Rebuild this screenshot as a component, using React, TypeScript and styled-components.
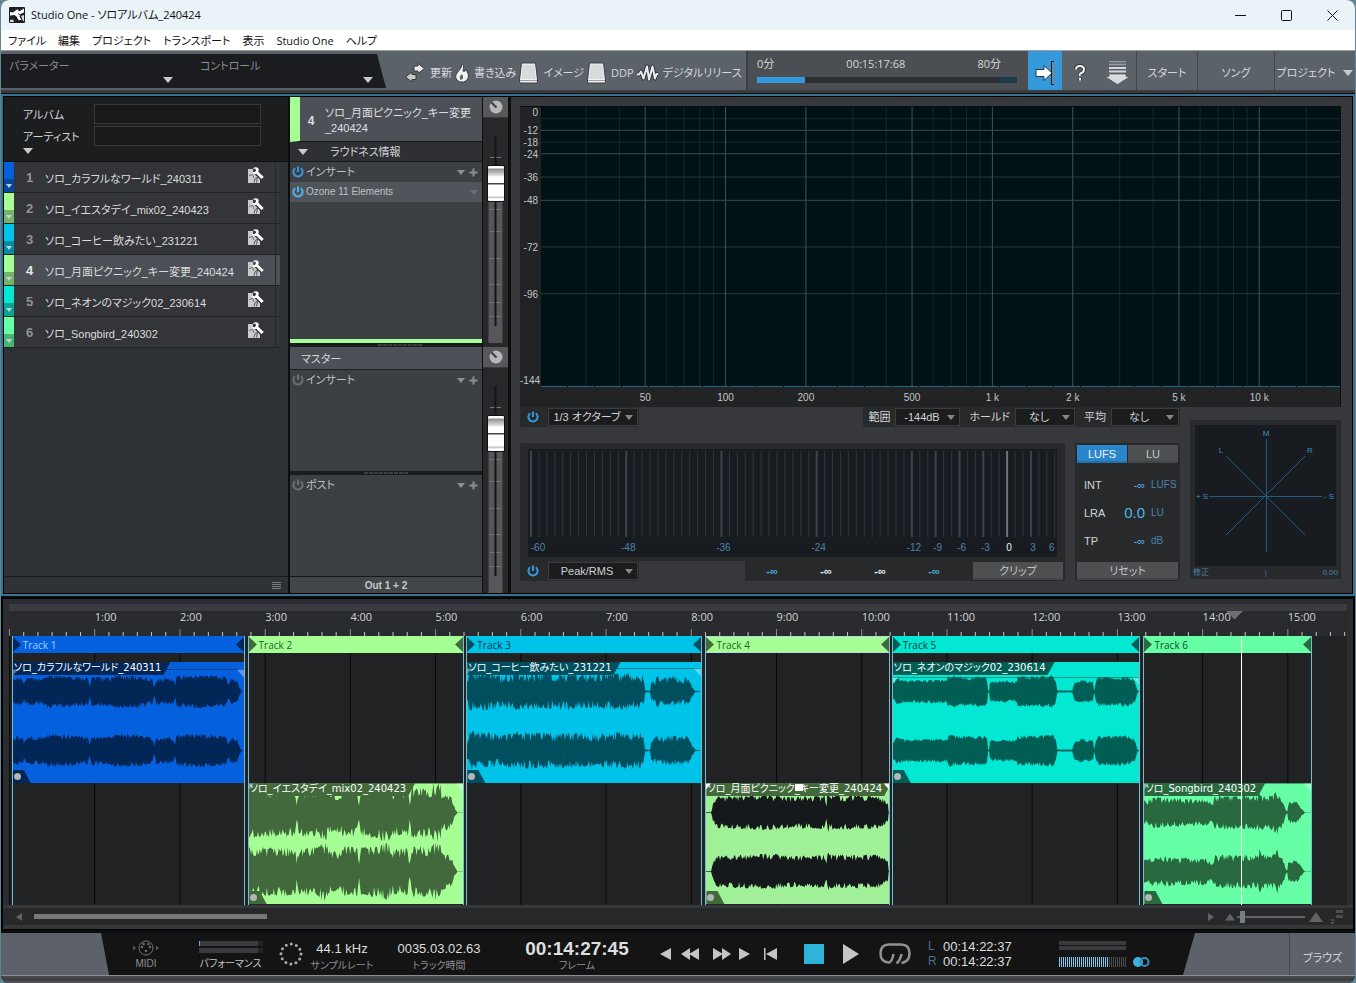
import React from "react";
import styled, { createGlobalStyle, css } from "styled-components";

const UI = `"Open Sans", "Noto Sans CJK JP", sans-serif`;
const HELV = `"Liberation Sans", "Noto Sans CJK JP", sans-serif`;
const MONO_LABEL = `"DejaVu Sans", "Noto Sans CJK JP", sans-serif`;

const GlobalStyle = createGlobalStyle`
  *, *::before, *::after { box-sizing: border-box; }
  body {
    margin: 0;
    background: #5f8795;
    font-family: ${HELV};
    font-size: 11px;
    line-height: 16px;
    font-feature-settings: "palt";
    color: #d3d5d6;
  }
  button, input, select { font: inherit; color: inherit; font-feature-settings: inherit; margin: 0; }
  button { border: 0; padding: 0; background: none; }
  svg { display: block; }
  ul { list-style: none; margin: 0; padding: 0; }
`;

/* ---------- window ---------- */

const Window = styled.div`
  display: flex;
  flex-direction: column;
  min-height: 100vh;
  margin: 0 1px;
  background: #0c0d0e;
  border-radius: 8px;
  overflow: hidden;
`;

const TitleBar = styled.header`
  display: flex;
  align-items: center;
  height: 30px;
  padding-left: 8px;
  background: #eaf3f7;
  color: #111;
  font-family: ${UI};
`;

const TitleText = styled.h1`
  flex: 1;
  margin: 0 0 0 6px;
  font-size: 11px;
  font-weight: 400;
`;

const WindowButton = styled.button`
  display: grid;
  place-items: center;
  width: 46px;
  height: 30px;
`;

const MenuBar = styled.nav`
  display: flex;
  gap: 12px;
  height: 21px;
  padding: 2px 7px 0;
  background: #fff;
  border-bottom: 1px solid #9a9fa3;
  color: #111;
  font-family: ${UI};
`;

/* ---------- toolbar ---------- */

const Toolbar = styled.div`
  display: flex;
  height: 42px;
  background: #5c626a;
  border-bottom: 3px solid #3a3c40;
  font-family: ${UI};
`;

const ParamPanel = styled.div`
  display: grid;
  flex: none;
  grid-template-columns: 191px 1fr;
  width: 385px;
  height: 34px;
  margin-top: 3px;
  padding: 4px 13px 0 8px;
  background: #1a1c20;
  clip-path: polygon(0 0, 376px 0, 385px 100%, 0 100%);
  color: #8b8e90;
`;

const ParamCell = styled.div`
  display: flex;
  justify-content: space-between;
  padding-right: 27px;
  &:last-child { padding-right: 0; }
`;

const Tri = styled.span<{ $c?: string; $s?: number; $mt?: number }>`
  display: block;
  flex: none;
  width: 0;
  height: 0;
  margin-top: ${(p) => p.$mt ?? 0}px;
  border-left: ${(p) => p.$s ?? 5}px solid transparent;
  border-right: ${(p) => p.$s ?? 5}px solid transparent;
  border-top: ${(p) => (p.$s ?? 5) + 1}px solid ${(p) => p.$c ?? "#c9cbcc"};
`;

const ToolActions = styled.div`
  display: flex;
  flex: 1;
  min-width: 0;
  align-items: center;
  gap: 3px;
  padding: 5px 0 0 19px;
  color: #d7d9da;
`;

const ToolButton = styled.button`
  display: flex;
  align-items: center;
  gap: 5px;
  white-space: nowrap;
`;

const Usage = styled.div`
  flex: none;
  width: 282px;
  padding: 5px 11px 0 9px;
  background: #4b4e52;
  border-left: 2px solid #3b3e42;
`;

const UsageLabels = styled.div`
  display: flex;
  justify-content: space-between;
  padding-right: 16px;
  color: #d7d9da;
`;

const UsageBar = styled.div`
  display: flex;
  height: 6px;
  margin-top: 5px;
  background: #2c2f33;
  border-right: 20px solid #1f3848;
`;

const UsageFill = styled.div`
  background: #3498df;
`;

const ToolTab = styled.button<{ $w: number; $active?: boolean; $sep?: boolean }>`
  display: flex;
  flex: none;
  align-items: center;
  justify-content: center;
  gap: 8px;
  width: ${(p) => p.$w}px;
  height: 39px;
  padding-top: 4px;
  color: #d7d9da;
  white-space: nowrap;
  ${(p) => p.$sep && css`border-left: 1px solid #43474c;`}
  ${(p) => p.$active && css`background: #3498d9;`}
`;

/* ---------- main frame ---------- */

const MainFrame = styled.main`
  display: grid;
  grid-template-columns: 284px 192px 25px 1fr;
  gap: 2px;
  flex: 1;
  margin-top: 1px;
  border: 2px solid #3b7290;
  outline: 1px solid #000;
  outline-offset: -3px;
  padding: 1px;
  background: #0d0e0f;
`;

const AlbumPanel = styled.section`
  display: flex;
  flex-direction: column;
  background: #2e3135;
`;

const AlbumHeader = styled.div`
  display: grid;
  grid-template-columns: 71px 167px;
  row-gap: 2px;
  align-content: start;
  height: 65px;
  padding: 7px 19px 0;
  background: #1c1d1f;
  border-bottom: 1px solid #111;
  label { padding-top: 3px; }
`;

const AlbumInput = styled.input`
  width: 167px;
  height: 20px;
  background: #18191b;
  border: 1px solid #38393b;
`;

const TrackRow = styled.li<{ $sel?: boolean }>`
  display: flex;
  align-items: stretch;
  height: 31px;
  margin-right: 8px;
  border-bottom: 1px solid #222325;
  background: ${(p) => (p.$sel ? "#4c5056" : "#333539")};
`;

const Swatch = styled.button<{ $c: string; $d: string }>`
  display: flex;
  align-items: flex-end;
  justify-content: center;
  width: 10px;
  padding-bottom: 4px;
  background: linear-gradient(${(p) => p.$c} 17px, ${(p) => p.$d} 17px);
`;

const TrackNo = styled.span<{ $sel?: boolean }>`
  width: 31px;
  padding-top: 8px;
  text-align: center;
  font-size: 13px;
  font-weight: 700;
  color: ${(p) => (p.$sel ? "#e6e7e8" : "#919395")};
`;

const TrackName = styled.span`
  flex: 1;
  padding-top: 9px;
  white-space: nowrap;
  color: #dcdddd;
`;

const TrackEdit = styled.button`
  display: grid;
  place-items: start center;
  width: 38px;
  padding: 5px 1px 0 0;
  border-right: 1px solid #26282b;
  margin-right: 4px;
`;

const AlbumFooter = styled.div`
  display: flex;
  justify-content: flex-end;
  height: 17px;
  margin-top: auto;
  padding: 4px 7px;
  border-top: 1px solid #191a1b;
`;

/* ---------- channel strip ---------- */

const Strip = styled.section`
  display: flex;
  flex-direction: column;
  background: #3c3f44;
`;

const StripTitle = styled.div`
  display: flex;
  height: 45px;
  align-items: center;
  padding: 4px 8px 0 0;
  background: #4d5157;
  border-left: 10px solid #a6ff94;
  border-bottom: 1px solid #151617;
  line-height: 15px;
  white-space: nowrap;
  color: #dddfe0;
`;

const StripNo = styled.b`
  width: 22px;
  margin-right: 3px;
  text-align: center;
  font-size: 12px;
`;

const LoudnessBar = styled.button`
  display: flex;
  align-items: center;
  gap: 22px;
  height: 20px;
  padding-left: 8px;
  background: #2f3033;
  border-bottom: 1px solid #151617;
`;

const SlotHead = styled.div<{ $fill?: boolean }>`
  display: flex;
  align-items: center;
  gap: 2px;
  flex: none;
  height: 20px;
  padding: 0 4px 0 2px;
  background: ${(p) => (p.$fill ? "#50555b" : "transparent")};
  color: #bfc1c3;
  font-size: ${(p) => (p.$fill ? 10 : 11)}px;
`;

const SlotLabel = styled.span`
  flex: 1;
`;

const IconButton = styled.button`
  display: grid;
  place-items: center;
  height: 12px;
  padding-left: 2px;
  &:first-child { padding-left: 0; }
`;

const SlotBody = styled.div<{ $h: number }>`
  flex: 1 0 ${(p) => p.$h}px;
`;

const GreenLine = styled.div`
  height: 4px;
  background: #a6ff94;
`;

const Grip = styled.div<{ $left: number }>`
  height: 4px;
  padding: 1px 0 1px ${(p) => p.$left}px;
  background: #1b1c1d;
  &::before {
    content: "";
    display: block;
    height: 2px;
    background: repeating-linear-gradient(90deg, #3b3d3f 0 4px, #1b1c1d 4px 5px);
    width: 44px;
  }
`;

const MasterTitle = styled.div`
  height: 23px;
  padding: 4px 11px;
  background: #4d5157;
  border-bottom: 1px solid #1d1e20;
`;

const OutLabel = styled.div`
  height: 17px;
  padding-top: 1px;
  border-top: 1px solid #151617;
  background: #42454a;
  text-align: center;
  font-size: 10px;
  line-height: 15px;
  font-weight: 700;
  color: #c7c9ca;
`;

const FaderColumn = styled.section`
  display: flex;
  flex-direction: column;
  margin: 0 1px 0 -1px;
  background: #28282a;
`;

const FaderUnit = styled.div`
  display: flex;
  flex-direction: column;
  flex: 1;
  &:first-child { flex: 0 0 250px; }
`;

const PanButton = styled.button`
  display: grid;
  place-items: center;
  height: 21px;
  background: #57585b;
  border-bottom: 1px solid #38393b;
`;

const FaderTrack = styled.div`
  display: grid;
  height: 225px;
  > * { grid-area: 1 / 1; }
`;

const FaderInput = styled.input`
  appearance: none;
  writing-mode: vertical-lr;
  direction: rtl;
  width: 25px;
  height: 225px;
  background: transparent;
  &::-webkit-slider-thumb {
    appearance: none;
    width: 18px;
    height: 37px;
    border: 1px solid #111;
    border-radius: 2px;
    background: linear-gradient(#fff 0 2px, #8f8f8f 3px, #d8d8d8 9px, #fff 11px 17px, #444 17px 18px, #fff 19px 30px, #bbb 31px, #fff 33px);
  }
`;

/* ---------- meters ---------- */

const MeterPanel = styled.section`
  display: flex;
  flex-direction: column;
  padding: 9px 11px 12px 9px;
  background: #37383c;
`;

const Spectrum = styled.div`
  display: grid;
  grid-template-columns: 21px 1fr;
  grid-template-rows: 1fr 20px;
  flex: 1 0 301px;
  border-top: 1px solid #0c0d0e;
  border-right: 1px solid #0c0d0e;
  background: #212324;
`;

const Chart = styled.svg`
  width: 100%;
  height: 100%;
  overflow: visible;
  font-family: ${HELV};
  font-size: 10px;
`;

const Lower = styled.div`
  display: flex;
  align-items: flex-start;
  gap: 10px;
`;

const LowerLeft = styled.div`
  flex: 1;
`;

const Row = styled.div`
  display: flex;
  justify-content: space-between;
`;

const ControlStrip = styled.div<{ $gap?: number }>`
  display: flex;
  align-items: center;
  gap: ${(p) => p.$gap ?? 5}px;
  height: 20px;
  padding: 0 1px 0 5px;
  background: #28292b;
  border-radius: 0 0 3px 3px;
`;

const PowerBox = styled.button`
  display: grid;
  place-items: center;
  width: 16px;
  height: 18px;
  margin-right: 7px;
`;

const SelectWrap = styled.span<{ $w: number }>`
  display: grid;
  align-items: center;
  width: ${(p) => p.$w}px;
  > * { grid-area: 1 / 1; }
  > span { justify-self: end; margin-right: 5px; pointer-events: none; }
`;

const SelectBox = styled.select`
  appearance: none;
  width: 100%;
  height: 18px;
  padding: 0 16px 0 4px;
  border: 1px solid #3b3c3e;
  border-radius: 0;
  background: #1b1c1d;
  color: #d0d2d3;
  text-align: center;
  text-align-last: center;
`;

const ControlGroup = styled.label`
  display: flex;
  align-items: center;
  gap: 5px;
`;

const Blocks = styled.div`
  display: flex;
  gap: 10px;
  margin-top: 16px;
`;

const PeakBlock = styled.div`
  flex: 1;
`;

const PeakTop = styled.div`
  height: 118px;
  padding: 6px 8px 4px;
  background: #28292b;
  border-radius: 2px 2px 0 0;
`;

const PeakChart = styled.div`
  height: 108px;
  background: #181c20;
`;

const Readouts = styled.div`
  display: flex;
  align-items: center;
  width: 320px;
  height: 20px;
  padding-right: 2px;
  background: #28292b;
`;

const Readout = styled.span<{ $c: string }>`
  width: 54px;
  text-align: center;
  font-weight: 700;
  color: ${(p) => p.$c};
`;

const GrayButton = styled.button<{ $on?: boolean; $w?: number }>`
  flex: ${(p) => (p.$w ? `0 0 ${p.$w}px` : 1)};
  height: 18px;
  margin-left: ${(p) => (p.$w ? "auto" : 0)};
  background: ${(p) => (p.$on ? "#2a86cb" : "#4e4f51")};
  box-shadow: inset 0 -2px 0 ${(p) => (p.$on ? "#2372ad" : "#444547")};
  color: ${(p) => (p.$on ? "#f0f4f6" : "#c3c5c6")};
  line-height: 16px;
`;

const Loudness = styled.div`
  display: flex;
  flex-direction: column;
  width: 105px;
  padding: 2px 2px 1px;
  background: #28292b;
  border-radius: 3px;
`;

const Tabs = styled.div`
  display: flex;
  gap: 1px;
`;

const LoudTable = styled.table`
  flex: 1;
  width: 100%;
  margin: 8px 0 7px;
  border-collapse: collapse;
  tbody { display: block; }
  tr { display: grid; grid-template-columns: 38px 30px 1fr; align-items: center; height: 28px; }
  th, td { padding: 0; font-weight: 400; text-align: left; white-space: nowrap; }
  th { padding-left: 7px; }
  td { text-align: right; color: #4fb4e8; }
  td:last-child { padding-left: 6px; text-align: left; color: #4b83ab; font-size: 10px; }
`;

const BigValue = styled.span`
  font-size: 15px;
`;

const Gonio = styled.div`
  width: 151px;
  margin-top: 13px;
  padding: 5px 5px 0;
  background: #28292b;
`;

const GonioPlot = styled.div`
  height: 141px;
  background: #181c20;
`;

const GonioFoot = styled.div`
  display: flex;
  justify-content: space-between;
  align-items: center;
  height: 13px;
  margin: 0 -2px;
  font-size: 8px;
  color: #4b83ab;
`;

/* ---------- timeline ---------- */

const TimelineFrame = styled.section`
  margin-top: 2px;
  padding: 5px 6px 0;
  border: 1px solid #000;
  border-left-width: 2px;
  border-right-width: 2px;
  background: #2c2d30;
`;

const Ruler = styled.div`
  height: 32px;
  border-top: 7px solid #3a3c41;
  background: #292a2d;
  > svg { overflow: visible; }
`;

const Lanes = styled.div`
  position: relative;
  height: 269px;
  background: #212224;
`;

const LaneGrid = styled.svg`
  display: block;
  width: 100%;
  height: 100%;
`;

const Region = styled.div`
  position: absolute;
  top: 0;
  bottom: 0;
  border: solid #74bdd2;
  border-width: 0 1px;
`;

const Marker = styled.div<{ $c: string; $d: string; $sel?: boolean }>`
  display: flex;
  align-items: center;
  justify-content: space-between;
  height: 17px;
  background: ${(p) => p.$c};
  color: ${(p) => p.$d};
  font-family: ${UI};
  font-size: 10px;
  ${(p) => p.$sel && css`box-shadow: inset 0 0 0 1px #b7d9dd;`}
`;

const MarkerName = styled.span<{ $c: string }>`
  flex: 1;
  margin-left: 2px;
  color: ${(p) => p.$c};
`;

const Clip = styled.div<{ $c: string; $low?: boolean }>`
  display: grid;
  justify-items: start;
  height: 121px;
  margin-top: ${(p) => (p.$low ? 130 : 9)}px;
  background: ${(p) => p.$c};
  isolation: isolate;
  overflow: hidden;
  > * { grid-area: 1 / 1; }
`;

const ClipTab = styled.span<{ $d: string }>`
  width: fit-content;
  height: 13px;
  padding: 0 9px 0 1px;
  background: ${(p) => p.$d};
  clip-path: polygon(0 0, 100% 0, calc(100% - 7px) 100%, 0 100%);
  color: #fff;
  font-family: ${MONO_LABEL};
  font-size: 10px;
  line-height: 11px;
  white-space: nowrap;
`;

const FadeLayer = styled.svg`
  z-index: 1;
  width: 100%;
  height: 30px;
`;

const GainHandle = styled.span`
  z-index: 1;
  justify-self: center;
  width: 8px;
  height: 7px;
  margin-top: 1px;
  background: #fff;
`;

const ClipCorner = styled.span<{ $d: string }>`
  align-self: end;
  width: 18px;
  height: 13px;
  padding: 3px 0 0 1px;
  background: ${(p) => p.$d};
  clip-path: polygon(0 0, 11px 0, 100% 100%, 0 100%);
  &::before {
    content: "";
    display: block;
    width: 7px;
    height: 7px;
    border-radius: 50%;
    background: #b3b5b6;
  }
`;

const Playhead = styled.div`
  position: absolute;
  top: 0;
  bottom: 0;
  width: 1px;
  background: #fff;
`;

const ScrollRow = styled.div`
  display: flex;
  align-items: center;
  height: 24px;
  margin: 0 -6px;
  padding: 0 10px 0 13px;
  border: solid #36373b;
  border-width: 3px 0 4px;
  background: #27282a;
`;

const ScrollTrack = styled.div`
  flex: 1;
  margin: 0 8px 0 12px;
`;

const ScrollThumb = styled.div`
  width: 20%;
  height: 5px;
  background: #77787a;
`;

const ZoomInput = styled.input`
  appearance: none;
  width: 68px;
  height: 12px;
  margin: 0 4px 0 1px;
  background: linear-gradient(#5f656b, #5f656b) center / 100% 2px no-repeat;
  &::-webkit-slider-thumb {
    appearance: none;
    width: 5px;
    height: 12px;
    background: #767c82;
    border: 0;
  }
`;

/* ---------- transport ---------- */

const Transport = styled.footer`
  display: flex;
  height: 42px;
  margin-top: 3px;
  background: #141414;
`;

const LeftWedge = styled.div`
  width: 108px;
  background: #5d626a;
  clip-path: polygon(0 0, 100px 0, 100% 100%, 0 100%);
`;

const RightWedge = styled.div`
  display: flex;
  justify-content: flex-end;
  width: 172px;
  margin-left: auto;
  background: #5d626a;
  clip-path: polygon(12px 0, 100% 0, 100% 100%, 0 100%);
`;

const BrowseButton = styled.button`
  width: 66px;
  padding-top: 8px;
  border-left: 1px solid #43474c;
`;

const Cell = styled.div<{ $w: number; $lit?: boolean }>`
  display: flex;
  flex-direction: column;
  align-items: center;
  justify-content: space-between;
  width: ${(p) => p.$w}px;
  padding: 7px 0 3px;
  font-size: 10px;
  color: ${(p) => (p.$lit ? "#c3c5c6" : "#8d9093")};
  white-space: nowrap;
`;

const Value = styled.span<{ $big?: boolean }>`
  font-size: ${(p) => (p.$big ? 19 : 13)}px;
  font-weight: ${(p) => (p.$big ? 700 : 400)};
  line-height: 18px;
  color: #dcdedf;
`;

const PerfBars = styled.div`
  display: grid;
  gap: 2px;
  width: 64px;
  margin-top: 1px;
`;

const PerfBar = styled.div<{ $lit?: boolean }>`
  height: 5px;
  background: linear-gradient(90deg, #3a3b3f 92%, #222325 92%);
  border-left: ${(p) => (p.$lit ? "1px solid #4fb4e8" : "1px solid #3a3b3f")};
`;

const TransportButton = styled.button<{ $w: number }>`
  display: grid;
  place-items: center;
  width: ${(p) => p.$w}px;
  color: #c3c5c6;
`;

const Locators = styled.dl`
  display: grid;
  grid-template-columns: 15px 1fr;
  align-content: center;
  width: 133px;
  margin: 0;
  padding-left: 2px;
  line-height: 15px;
  dt { color: #47718f; font-size: 12px; }
  dd { margin: 0; font-size: 13px; color: #dcdedf; }
`;

const OutMeters = styled.div`
  width: 96px;
  padding-top: 8px;
`;

const OutBar = styled.div`
  width: 67px;
  height: 4px;
  margin-bottom: 1px;
  background: #3a3b3f;
`;

const OutRow = styled.div`
  display: flex;
  align-items: center;
  gap: 7px;
  margin-top: 7px;
`;

const OutTicks = styled.div`
  width: 67px;
  height: 10px;
  background:
    repeating-linear-gradient(90deg, transparent 0 1px, #141414 1px 2px),
    linear-gradient(90deg, #86c6ea 74%, #4a4c4e 74%);
`;

const BottomEdge = styled.div`
  height: 8px;
  border-top: 1px solid #8d9092;
  background: linear-gradient(#4a4c4f, #3a3c3f 50%, #55585c);
`;

/* ---------- drawings ---------- */

const Power = ({ on = true, color }: { on?: boolean; color?: string }) => (
  <svg width="12" height="12" viewBox="0 0 12 12" fill="none" stroke={color ?? (on ? "#3498df" : "#6d7073")} strokeWidth="2">
    <path d="M3.200 2.200A4.600 4.600 0 1 0 8.800 2.200" />
    <path d="M6 0.500V6" />
  </svg>
);

const Plus = () => (
  <svg width="9" height="9" viewBox="0 0 9 9" stroke="#8d9093" strokeWidth="2">
    <path d="M4.500 0.500V8.500M0.500 4.500H8.500" />
  </svg>
);

const AppLogo = () => (
  <svg width="16" height="16" viewBox="0 0 16 16">
    <rect width="16" height="16" rx="1" fill="#1d2022" />
    <path d="M1 5L4 5.500 7 3 9 2.500 10 4.500 15 1.500V5.500L11.500 7 10.500 9.500 12.500 13H9.500L7.500 9.500 5.500 8 1 8.500Z" fill="#fff" />
    <path d="M1 13L4 12.500 5 15H1ZM12 9L15 8V14H14Z" fill="#d5d9db" />
    <path d="M9 6.500L11 8" stroke="#1d2022" />
  </svg>
);

const EditIcon = () => (
  <svg width="16" height="16" viewBox="0 0 16 16">
    <path d="M0 2H5V6H12V16H0Z" fill="#c9cbcc" />
    <path d="M1 8.500L4.500 7.500 6 11" stroke="#6b6e71" strokeWidth="1" fill="none" />
    <path d="M6 15.500Q6 11.500 9.500 10L8.500 15.500" stroke="#55585b" strokeWidth="1" fill="none" />
    <path d="M8 5L14 11" stroke="#333539" strokeWidth="5" />
    <path d="M4.500 1.500Q8 -1 10.500 1.500 11 3 10.300 4.700L15.800 10 13.500 12 8.300 6.800Q6 7.500 4.500 6L4 4.500 6.500 5.200 8 3.800 7.500 1.800Z" fill="#fff" />
  </svg>
);

const SyncIcon = () => (
  <svg width="20" height="20" viewBox="0 0 20 20" fill="#eceeee" stroke="#33373b" strokeWidth="1">
    <path d="M9 3h4V0.500L19.500 5.500 13 10.500V8H9z" />
    <path d="M11 11.500H7V9L0.500 14 7 19v-2.500h4z" fill="#c9cccd" />
  </svg>
);

const FlameIcon = () => (
  <svg width="14" height="20" viewBox="0 0 14 20">
    <path d="M7 .5C9.500 3 8.500 5 8 7.500 8 9 10 9.200 10.500 6.500 13.500 9.500 14.500 14 12 17 10 19.500 4.500 20 2 17 -0.500 14 1 11 3.500 8 5.500 5.500 6.800 4 7 .5Z" fill="#f0f1f1" stroke="#33373b" />
    <path d="M7 11C5 12.500 4 14.500 5.500 17 7.500 16.500 8.500 15 8 13.500Z" fill="#5c626a" />
  </svg>
);

const DiskIcon = () => (
  <svg width="19" height="22" viewBox="0 0 19 22">
    <path d="M2.500 1H16.500L18.500 18V20Q18.500 21 17 21H2Q.5 21 .5 20V18Z" fill="#f3f4f4" stroke="#3a3e42" />
    <path d="M3.500 2.500H15.500L16.800 17H2.200Z" fill="#d8dadb" />
    <path d="M1 18.500h17" stroke="#9b9ea0" />
  </svg>
);

const PulseIcon = () => (
  <svg width="21" height="18" viewBox="0 0 21 18" fill="none" strokeLinejoin="round">
    {["#33373b", "#eceeee"].map((c, i) => (
      <path key={c} d="M0 10.500H2L4 7.500 6.500 14.500 10 2.500 12 15.500 15.500 2.500 18 14.500 19.500 10H21" stroke={c} strokeWidth={i ? 2 : 4} />
    ))}
  </svg>
);

const FollowIcon = () => (
  <svg width="20" height="24" viewBox="0 0 20 24" strokeWidth="1">
    <path d="M1 8.500H9V4.500L17 12 9 19.500V15.500H1Z" fill="#fff" stroke="#1c3a52" />
    <path d="M17.500 0V24" stroke="#16202a" strokeWidth="3" />
    <path d="M18 1V23" stroke="#dfeefa" strokeWidth="1" />
  </svg>
);

const HelpIcon = () => (
  <svg width="14" height="18" viewBox="0 0 14 18" fill="none">
    {["#33373b", "#f0f1f1"].map((c, i) => (
      <g key={c} stroke={c} strokeWidth={i ? 2 : 4}>
        <path d="M3 5.500Q3 2 7 2t4 3.500Q11 8 8.500 9T7 12" />
        <path d="M7 14V16.500" />
      </g>
    ))}
  </svg>
);

const DownIcon = () => (
  <svg width="27" height="24" viewBox="0 0 27 24">
    <path d="M5 0.500h17M5 3.500h17" stroke="#9b9fa3" strokeWidth="1.500" />
    <path d="M5 7h17M5 10.500h17" stroke="#d5d7d8" strokeWidth="2" />
    <path d="M5 13h17v2.500h4L13.500 23.500 1 15.500h4z" fill="#d9dbdc" stroke="#44484c" strokeWidth=".6" />
  </svg>
);

const FaderScale = () => (
  <svg width="25" height="225" viewBox="0 0 25 225">
    <path d="M5.500 60H19.500V225H5.500z" fill="#56575a" />
    <path d="M12.500 18V208" stroke="#141414" strokeWidth="2" />
    {[39.5, 91.5, 113.5, 140.5, 166.5, 184.5, 198.5].map((y) => (
      <path key={y} d={`M7 ${y}H11.500M13.500 ${y}H18`} stroke="#77736c" />
    ))}
  </svg>
);

const FREQ_LABELS: [number, string][] = [
  [50, "50"], [100, "100"], [200, "200"], [500, "500"], [1000, "1 k"], [2000, "2 k"], [5000, "5 k"], [10000, "10 k"],
];
const freqX = (f: number) => `${Math.log10(f / 20) * 33.4 - 0.25}%`;
const MINOR_FREQS = [30, 40, 60, 70, 80, 90, 300, 400, 600, 700, 800, 900, 3000, 4000, 6000, 7000, 8000, 9000, 15000];
const DB_MARKS = [12, 18, 24, 36, 48, 72, 96];

function SpectrumChart() {
  return (
    <Spectrum>
      <Chart fill="#c3c5c6" textAnchor="end">
        <text x="18" y="9">0</text>
        {DB_MARKS.map((d) => (
          <text key={d} x="18" y={`${(d / 144) * 100 + 1.4}%`}>{-d}</text>
        ))}
        <text x="20" y="99%">-144</text>
      </Chart>
      <Chart>
        <rect width="100%" height="100%" fill="#001216" />
        {MINOR_FREQS.map((f) => (
          <line key={f} x1={freqX(f)} x2={freqX(f)} y1="0" y2="100%" stroke="#14282b" />
        ))}
        {[6, 18, 36, 72, 96].map((d) => (
          <line key={d} x1="0" x2="100%" y1={`${d / 1.44}%`} y2={`${d / 1.44}%`} stroke={d < 20 ? "#14282b" : "#26393c"} />
        ))}
        {FREQ_LABELS.map(([f]) => (
          <line key={f} x1={freqX(f)} x2={freqX(f)} y1="0" y2="100%" stroke="#435154" />
        ))}
        {[12, 24, 48].map((d) => (
          <line key={d} x1="0" x2="100%" y1={`${d / 1.44}%`} y2={`${d / 1.44}%`} stroke="#3c4b4e" />
        ))}
        <line x1="0" x2="100%" y1="99.8%" y2="99.8%" stroke="#2a6688" strokeDasharray="26 1" />
      </Chart>
      <span />
      <Chart fill="#c3c5c6" textAnchor="middle">
        {FREQ_LABELS.map(([f, l]) => (
          <text key={f} x={freqX(f)} y="14">{l}</text>
        ))}
      </Chart>
    </Spectrum>
  );
}

const peakX = (d: number) => `${(d + 60) * 1.5 + 0.57}%`;
const PEAK_LABELS = [-48, -36, -24, -12, -9, -6, -3, 0, 3];

function PeakMeter() {
  const all = Array.from({ length: 67 }, (_, i) => i - 60);
  return (
    <Chart textAnchor="middle" fill="#4b83ab">
      {all.map((d) => {
        const major = d === -60 || PEAK_LABELS.includes(d);
        return (
          <line key={d} x1={peakX(d)} x2={peakX(d)} y1="2" y2="88"
            stroke={d === 0 ? "#6a7482" : major ? "#3a4350" : "#2e363e"} strokeWidth={major ? 2 : 1} />
        );
      })}
      <text x="10" y="102">-60</text>
      {PEAK_LABELS.map((d) => (
        <text key={d} x={peakX(d)} dx="2" y="102" fill={d === 0 ? "#f0f1f2" : undefined}>{d}</text>
      ))}
      <text x="99%" y="102">6</text>
    </Chart>
  );
}

const GonioChart = () => (
  <svg width="100%" height="141" viewBox="0 0 141 141" stroke="#235a83" fontFamily="Liberation Sans, sans-serif" fontSize="8" textAnchor="middle">
    <path d="M71.500 14V127M14 71.500H127" />
    <path d="M31 31L110 110M110 31L31 110" />
    <g fill="#3a8cc2" stroke="none">
      <text x="71" y="11">M</text>
      <text x="26" y="28">L</text>
      <text x="115" y="28">R</text>
      <text x="7" y="74">+ S</text>
      <text x="134" y="74">- S</text>
    </g>
  </svg>
);

/* ---------- data ---------- */

type Env = [number, number][];

interface Track {
  n: number;
  name: string;
  start: number;
  end: number;
  color: string;
  dark: string;
  text: string;
  wave: string;
  mid: string;
  low?: boolean;
  sel?: boolean;
  line: number;
  rough: number;
  env: Env;
  marker?: string;
}

const TRACKS: Track[] = [
  {
    n: 1, name: "ソロ_カラフルなワールド_240311", start: 2, end: 166, color: "#0560de", dark: "#022656", text: "#9fd2ff",
    wave: "#022656", mid: "#0a4496", line: 7.5, rough: 0.3,
    env: [[0, 12], [4, 15], [10, 13], [11, 8], [13, 14], [34, 14], [35, 17], [50, 16], [75, 14], [77, 6], [79, 15], [98, 14], [102, 17], [125, 16], [140, 13], [142, 5], [144, 14], [161, 13], [163, 6], [164, 16], [185, 17], [200, 16], [214, 15], [216, 7], [219, 13], [225, 12], [228, 3], [230, 0], [232, 0]],
  },
  {
    n: 2, name: "ソロ_イエスタデイ_mix02_240423", start: 168, end: 320.3, color: "#a6ff94", dark: "#42693b", text: "#22642a",
    wave: "#42693b", mid: "#77b069", low: true, line: 0.5, rough: 0.42,
    env: [[0, 26], [4, 26], [10, 25], [45, 25], [47, 24], [48, 8], [50, 24], [70, 25], [73, 30], [78, 29], [80, 22], [92, 20], [96, 26], [109, 25], [111, 8], [113, 25], [130, 26], [133, 30], [141, 29], [144, 23], [160, 24], [162, 8], [164, 26], [184, 25], [187, 32], [193, 30], [194, 19], [204, 17], [206, 8], [210, 0], [216, 0]],
  },
  {
    n: 3, name: "ソロ_コーヒー飲みたい_231221", start: 322, end: 488, color: "#00c3ea", dark: "#004f5e", text: "#04333c",
    wave: "#004f5e", mid: "#0088a3", line: 6.5, rough: 0.5,
    env: [[0, 12], [3, 20], [20, 19], [35, 16], [50, 19], [80, 18], [110, 18], [130, 17], [150, 19], [177, 18], [179, 9], [180, 1], [185, 1], [186, 10], [192, 16], [200, 14], [206, 16], [215, 15], [222, 15], [226, 9], [230, 1], [236, 0]],
  },
  {
    n: 4, name: "ソロ_月面ピクニック_キー変更_240424", start: 490.3, end: 620, color: "#9ff096", dark: "#42693b", text: "#22642a",
    wave: "#15191b", mid: "#15191b", low: true, sel: true, line: 0.5, rough: 0.36, marker: "#a6ff94",
    env: [[0, 0], [5, 0], [7, 9], [10, 16], [40, 17], [60, 18], [90, 16], [118, 17], [120, 8], [121, 22], [123, 17], [150, 17], [172, 17], [178, 14], [181, 10], [182, 0], [184, 0]],
  },
  {
    n: 5, name: "ソロ_ネオンのマジック02_230614", start: 621.5, end: 796.5, color: "#02e8d2", dark: "#005e55", text: "#04332f",
    wave: "#005e55", mid: "#009f90", line: 15.5, rough: 0.26,
    env: [[0, 9], [4, 14], [12, 11], [30, 12], [50, 12], [54, 11], [56, 16], [72, 15], [93, 15], [95, 12], [96, 1], [97, 1], [98, 10], [108, 11], [122, 11], [125, 11], [126, 15], [162, 16], [164, 13], [166, 1], [181, 1], [183, 9], [188, 12], [198, 11], [202, 10], [203, 1], [205, 10], [207, 15], [240, 15], [244, 12], [247, 1], [249, 0]],
  },
  {
    n: 6, name: "ソロ_Songbird_240302", start: 798.7, end: 917.7, color: "#66ffa6", dark: "#29693f", text: "#0d4d2a",
    wave: "#29693f", mid: "#49b574", low: true, line: 0.5, rough: 0.42,
    env: [[0, 12], [10, 16], [20, 15], [50, 14], [62, 14], [68, 9], [72, 17], [90, 17], [115, 18], [117, 23], [119, 18], [130, 18], [135, 23], [140, 15], [144, 2], [145, 1], [146, 11], [155, 11], [162, 1], [163, 0], [169, 0]],
  },
];

const SPAN = 942;
const pct = (s: number) => `${(s / SPAN) * 100}%`;

function makeWave(env: Env, rough: number, center: number, seed: number) {
  const width = env[env.length - 1][0];
  let s = seed * 7919;
  const rnd = () => {
    s = (s * 16807) % 2147483647;
    return s / 2147483647;
  };
  rnd();
  const up: string[] = [];
  const down: string[] = [];
  let k = 0;
  for (let x = 0; x <= width; x += 1) {
    while (k < env.length - 2 && env[k + 1][0] < x) k += 1;
    const [x0, a0] = env[k];
    const [x1, a1] = env[k + 1];
    const a = Math.min(29.5, a0 + ((a1 - a0) * (x - x0)) / (x1 - x0));
    const peak = rnd() > 0.7 ? 0.25 : 1;
    const hi = a * (1 - rough * peak * rnd());
    const lo = a * (1 - rough * peak * rnd());
    up.push(`${x} ${(center - hi).toFixed(1)}`);
    down.unshift(`${x} ${(center + lo).toFixed(1)}`);
  }
  return `M${up.join("L")}L${down.join("L")}Z`;
}

function Wave({ t }: { t: Track }) {
  const w = t.env[t.env.length - 1][0];
  return (
    <svg width="100%" height="121" viewBox={`0 0 ${w} 121`} preserveAspectRatio="none">
      <path d={`M0 ${t.line}H${w}`} stroke={t.wave} strokeOpacity=".6" />
      <path d={`M0 29.500H${w}M0 88.500H${w}`} stroke={t.mid} strokeOpacity=".7" />
      <path d={makeWave(t.env, t.rough, 29.5, 77 + t.n * 131)} fill={t.wave} />
      <path d={makeWave(t.env, t.rough, 88.5, 991 + t.n * 57)} fill={t.wave} />
    </svg>
  );
}

const FadeCorners = ({ t }: { t: Track }) => (
  <FadeLayer fill="#fff" fillOpacity={t.sel ? 1 : 0.35}>
    <path d={`M0 ${t.line}H5L0 ${t.line + 6}Z`} />
    <svg x="100%" overflow="visible">
      <path d={`M-7 ${t.line}H0V${t.line + 8}Z`} />
    </svg>
  </FadeLayer>
);

function Timeline() {
  const minutes = Array.from({ length: 15 }, (_, i) => i + 1);
  const ticks = Array.from({ length: 95 }, (_, i) => i * 10);
  return (
    <TimelineFrame>
      <Ruler>
        <svg width="100%" height="25" fontFamily="Open Sans, sans-serif" fontSize="11" fill="#d3d5d6">
          {ticks.map((s) => (
            <line key={s} x1={pct(s + 0.35)} x2={pct(s + 0.35)} y1={s % 60 ? 21 : 18} y2="25" stroke={s % 60 ? "#c3c5c6" : "#8a8c8e"} />
          ))}
          {minutes.map((m) => (
            <text key={m} x={pct(m * 60 + 0.35)} y="10">{m}:00</text>
          ))}
          <svg x={pct(862.5)} y="0" overflow="visible">
            <path d="M-8 0H9L0.500 8.500Z" fill="#6d6f71" />
          </svg>
        </svg>
      </Ruler>
      <Lanes>
        <LaneGrid>
          {[0, ...minutes].map((m) => (
            <line key={m} x1={pct(m * 60 + 0.35)} x2={pct(m * 60 + 0.35)} y1="0" y2="100%" stroke="#08090a" />
          ))}
        </LaneGrid>
        {TRACKS.map((t) => (
          <Region key={t.n} style={{ left: pct(t.start), width: pct(t.end - t.start) }}>
            <Marker $c={t.marker ?? t.color} $d={t.dark} $sel={t.sel}>
              <svg width="8" height="17"><path d="M0 1L8 8.500 0 16Z" fill={t.dark} /></svg>
              <MarkerName $c={t.text}>Track {t.n}</MarkerName>
              <svg width="8" height="17"><path d="M8 1L0 8.500 8 16Z" fill={t.dark} /></svg>
            </Marker>
            <Clip $c={t.color} $low={t.low}>
              <Wave t={t} />
              <ClipTab $d={t.dark}>{t.name}</ClipTab>
              <FadeCorners t={t} />
              {t.sel && <GainHandle />}
              <ClipCorner $d={t.dark} />
            </Clip>
          </Region>
        ))}
        <Playhead style={{ left: pct(867.4) }} />
      </Lanes>
      <ScrollRow>
        <svg width="6" height="8"><path d="M6 0V8L0 4Z" fill="#606366" /></svg>
        <ScrollTrack><ScrollThumb /></ScrollTrack>
        <svg width="6" height="8"><path d="M0 0V8L6 4Z" fill="#606366" /></svg>
        <svg width="22" height="8"><path d="M11 7.500L16 0.500 21 7.500Z" fill="#606366" /></svg>
        <ZoomInput type="range" aria-label="ズーム" defaultValue={4} />
        <svg width="14" height="10"><path d="M0 10L7 0 14 10Z" fill="#606366" /></svg>
        <svg width="20" height="14" viewBox="-6 0 20 14" fill="#4c4f52">
          <path d="M7 0h7v3H7zM7 5h7v3H7zM2 9h3v2H2zM2 12h3v2H2z" />
        </svg>
      </ScrollRow>
    </TimelineFrame>
  );
}

function Dropdown({ w, value, label }: { w: number; value: string; label?: string }) {
  return (
    <SelectWrap $w={w}>
      <SelectBox aria-label={label} defaultValue={value}>
        <option>{value}</option>
      </SelectBox>
      <Tri $s={4} $c="#85878a" />
    </SelectWrap>
  );
}

function Slot({ label, on, color, fill, add = true }: { label: string; on: boolean; color?: string; fill?: boolean; add?: boolean }) {
  return (
    <SlotHead $fill={fill}>
      <IconButton aria-label="電源"><Power on={on} color={color} /></IconButton>
      <SlotLabel>{label}</SlotLabel>
      <Tri $s={4} $c={add ? "#8d9093" : "#6d7175"} />
      {add && <IconButton aria-label="追加"><Plus /></IconButton>}
    </SlotHead>
  );
}

function Fader({ label }: { label: string }) {
  return (
    <FaderUnit>
      <PanButton aria-label="パン">
        <svg width="14" height="14"><circle cx="7" cy="7" r="6.500" fill="#b5b7b8" /><path d="M7.500 7.500L2.500 2.500" stroke="#3a3b3d" strokeWidth="2" /></svg>
      </PanButton>
      <FaderTrack>
        <FaderScale />
        <FaderInput type="range" aria-label={label} defaultValue={75} />
      </FaderTrack>
    </FaderUnit>
  );
}

const SWATCH: [string, string][] = [
  ["#0560de", "#07469b"], ["#a6ff94", "#74b368"], ["#00c3ea", "#0b89a3"], ["#a6ff94", "#74b368"], ["#02e8d2", "#0ba394"], ["#66ffa6", "#49b374"],
];

export default function App() {
  return (
    <>
      <GlobalStyle />
      <Window>
        <TitleBar>
          <AppLogo />
          <TitleText>Studio One - ソロアルバム_240424</TitleText>
          <WindowButton aria-label="最小化"><svg width="11" height="11"><path d="M0 5.500H11" stroke="#111" /></svg></WindowButton>
          <WindowButton aria-label="最大化"><svg width="11" height="11"><rect x="0.500" y="0.500" width="10" height="10" rx="1" fill="none" stroke="#111" /></svg></WindowButton>
          <WindowButton aria-label="閉じる"><svg width="11" height="11"><path d="M0.500 0.500L10.500 10.500M10.500 0.500L0.500 10.500" stroke="#111" /></svg></WindowButton>
        </TitleBar>
        <MenuBar>
          {["ファイル", "編集", "プロジェクト", "トランスポート", "表示", "Studio One", "ヘルプ"].map((m) => (
            <button key={m}>{m}</button>
          ))}
        </MenuBar>
        <Toolbar>
          <ParamPanel>
            <ParamCell>パラメーター<Tri $mt={19} /></ParamCell>
            <ParamCell>コントロール<Tri $mt={19} /></ParamCell>
          </ParamPanel>
          <ToolActions>
            <ToolButton><SyncIcon />更新</ToolButton>
            <ToolButton><FlameIcon />書き込み</ToolButton>
            <ToolButton><DiskIcon />イメージ</ToolButton>
            <ToolButton><DiskIcon />DDP</ToolButton>
            <ToolButton><PulseIcon />デジタルリリース</ToolButton>
          </ToolActions>
          <Usage>
            <UsageLabels><span>0分</span><span>00:15:17:68</span><span>80分</span></UsageLabels>
            <UsageBar><UsageFill style={{ width: "20%" }} /></UsageBar>
          </Usage>
          <ToolTab $w={34} $active aria-label="追従"><FollowIcon /></ToolTab>
          <ToolTab $w={36} aria-label="ヘルプ"><HelpIcon /></ToolTab>
          <ToolTab $w={38} aria-label="インストール"><DownIcon /></ToolTab>
          <ToolTab $w={61} $sep>スタート</ToolTab>
          <ToolTab $w={77} $sep>ソング</ToolTab>
          <ToolTab $w={81} $sep>プロジェクト<Tri /></ToolTab>
        </Toolbar>

        <MainFrame>
          <AlbumPanel>
            <AlbumHeader>
              <label htmlFor="album">アルバム</label>
              <AlbumInput id="album" />
              <label htmlFor="artist">アーティスト</label>
              <AlbumInput id="artist" />
              <Tri />
            </AlbumHeader>
            <ul>
              {TRACKS.map((t, i) => (
                <TrackRow key={t.n} $sel={t.sel}>
                  <Swatch $c={SWATCH[i][0]} $d={SWATCH[i][1]} aria-label={`カラー ${t.n}`}><Tri $s={3} $c="#b9d3dd" /></Swatch>
                  <TrackNo $sel={t.sel}>{t.n}</TrackNo>
                  <TrackName>{t.name}</TrackName>
                  <TrackEdit aria-label={`編集 ${t.n}`}><EditIcon /></TrackEdit>
                </TrackRow>
              ))}
            </ul>
            <AlbumFooter>
              <svg width="9" height="9"><path d="M0 1.500H9M0 3.500H9M0 5.500H9M0 7.500H9" stroke="#77797b" /></svg>
            </AlbumFooter>
          </AlbumPanel>

          <Strip>
            <StripTitle><StripNo>4</StripNo><span>ソロ_月面ピクニック_キー変更<br />_240424</span></StripTitle>
            <LoudnessBar><Tri />ラウドネス情報</LoudnessBar>
            <Slot label="インサート" on />
            <Slot label="Ozone 11 Elements" on color="#4fb4ec" fill add={false} />
            <SlotBody $h={137} />
            <GreenLine />
            <Grip $left={88} />
            <MasterTitle>マスター</MasterTitle>
            <Slot label="インサート" on={false} />
            <SlotBody $h={81} />
            <Grip $left={74} />
            <Slot label="ポスト" on={false} />
            <SlotBody $h={81} />
            <OutLabel>Out 1 + 2</OutLabel>
          </Strip>

          <FaderColumn>
            <Fader label="トラック音量" />
            <Fader label="マスター音量" />
          </FaderColumn>

          <MeterPanel>
            <SpectrumChart />
            <Lower>
              <LowerLeft>
                <Row>
                  <ControlStrip $gap={0}>
                    <PowerBox aria-label="電源"><Power /></PowerBox>
                    <Dropdown w={90} value="1/3 オクターブ" label="表示モード" />
                  </ControlStrip>
                  <ControlStrip $gap={9}>
                    <ControlGroup>範囲<Dropdown w={65} value="-144dB" /></ControlGroup>
                    <ControlGroup>ホールド<Dropdown w={60} value="なし" /></ControlGroup>
                    <ControlGroup>平均<Dropdown w={68} value="なし" /></ControlGroup>
                  </ControlStrip>
                </Row>
                <Blocks>
                  <PeakBlock>
                    <PeakTop><PeakChart><PeakMeter /></PeakChart></PeakTop>
                    <Row>
                      <ControlStrip $gap={0}>
                        <PowerBox aria-label="電源"><Power /></PowerBox>
                        <Dropdown w={90} value="Peak/RMS" label="メーター" />
                      </ControlStrip>
                      <Readouts>
                        <Readout $c="#4fa9de">-∞</Readout>
                        <Readout $c="#e4f2fa">-∞</Readout>
                        <Readout $c="#e4f2fa">-∞</Readout>
                        <Readout $c="#4fa9de">-∞</Readout>
                        <GrayButton $w={90}>クリップ</GrayButton>
                      </Readouts>
                    </Row>
                  </PeakBlock>
                  <Loudness>
                    <Tabs><GrayButton $on>LUFS</GrayButton><GrayButton>LU</GrayButton></Tabs>
                    <LoudTable>
                      <tbody>
                        <tr><th scope="row">INT</th><td>-∞</td><td>LUFS</td></tr>
                        <tr><th scope="row">LRA</th><td><BigValue>0.0</BigValue></td><td>LU</td></tr>
                        <tr><th scope="row">TP</th><td>-∞</td><td>dB</td></tr>
                      </tbody>
                    </LoudTable>
                    <Tabs><GrayButton>リセット</GrayButton></Tabs>
                  </Loudness>
                </Blocks>
              </LowerLeft>
              <Gonio>
                <GonioPlot><GonioChart /></GonioPlot>
                <GonioFoot><span>修正</span><span>|</span><span>0.00</span></GonioFoot>
              </Gonio>
            </Lower>
          </MeterPanel>
        </MainFrame>

        <Timeline />

        <Transport>
          <LeftWedge />
          <Cell $w={74}>
            <svg width="28" height="16" viewBox="0 0 28 16" fill="none" stroke="#6f7275">
              <circle cx="14" cy="8" r="7" />
              <path d="M1 5.500V10.500L4 8ZM24 5.500V10.500L27 8Z" fill="#55585b" stroke="none" />
              <g fill="#6f7275" stroke="none">
                <circle cx="10" cy="7" r="1.200" /><circle cx="18" cy="7" r="1.200" /><circle cx="11.500" cy="4" r="1.200" /><circle cx="16.500" cy="4" r="1.200" /><circle cx="14" cy="11" r="1.200" />
              </g>
            </svg>
            <span>MIDI</span>
          </Cell>
          <Cell $w={95} $lit>
            <PerfBars><PerfBar $lit /><PerfBar /></PerfBars>
            <span>パフォーマンス</span>
          </Cell>
          <TransportButton $w={26} aria-label="状態">
            <svg width="24" height="24">
              <circle cx="12" cy="12" r="10" fill="none" stroke="#a9abac" strokeWidth="3" strokeLinecap="round" strokeDasharray="0 5.236" />
            </svg>
          </TransportButton>
          <Cell $w={76}><Value>44.1 kHz</Value><span>サンプルレート</span></Cell>
          <Cell $w={118}><Value>0035.03.02.63</Value><span>トラック時間</span></Cell>
          <Cell $w={158}><Value $big>00:14:27:45</Value><span>フレーム</span></Cell>
          <TransportButton $w={18} aria-label="前"><svg width="11" height="12"><path d="M11 0V12L0 6Z" fill="currentColor" /></svg></TransportButton>
          <TransportButton $w={31} aria-label="巻き戻し"><svg width="18" height="12"><path d="M9 0V12L0 6ZM18 0V12L8 6Z" fill="currentColor" /></svg></TransportButton>
          <TransportButton $w={33} aria-label="早送り"><svg width="18" height="12"><path d="M0 0V12L10 6ZM9 0V12L18 6Z" fill="currentColor" /></svg></TransportButton>
          <TransportButton $w={12} aria-label="次"><svg width="11" height="12"><path d="M0 0V12L11 6Z" fill="currentColor" /></svg></TransportButton>
          <TransportButton $w={40} aria-label="先頭へ"><svg width="13" height="12"><path d="M0 0H1.500V12H0ZM13 0V12L2 6Z" fill="currentColor" /></svg></TransportButton>
          <TransportButton $w={48} aria-label="停止"><svg width="20" height="20"><rect width="20" height="20" fill="#2fb4d9" /></svg></TransportButton>
          <TransportButton $w={26} aria-label="再生"><svg width="16" height="20"><path d="M0 0V20L16 10Z" fill="currentColor" /></svg></TransportButton>
          <TransportButton $w={62} aria-label="ループ">
            <svg width="32" height="22" viewBox="0 0 32 22" fill="none" stroke="#8f9193" strokeWidth="2.500">
              <path d="M14.500 11Q13 19.500 9.500 19.500 1.500 18.500 1.500 10.500 1.500 1.500 10 1.500H22Q30.500 1.500 30.500 10.500 30.500 18.500 22.500 20" />
              <path d="M22.500 11Q21.500 17 17.500 20.500" />
            </svg>
          </TransportButton>
          <Locators>
            <dt>L</dt><dd>00:14:22:37</dd>
            <dt>R</dt><dd>00:14:22:37</dd>
          </Locators>
          <OutMeters>
            <OutBar /><OutBar />
            <OutRow>
              <OutTicks />
              <svg width="17" height="10"><circle cx="5" cy="5" r="5" fill="#3fb0dd" /><circle cx="11.500" cy="5" r="4" fill="none" stroke="#3a8fc0" strokeWidth="2" /></svg>
            </OutRow>
          </OutMeters>
          <RightWedge><BrowseButton>ブラウズ</BrowseButton></RightWedge>
        </Transport>
        <BottomEdge />
      </Window>
    </>
  );
}
